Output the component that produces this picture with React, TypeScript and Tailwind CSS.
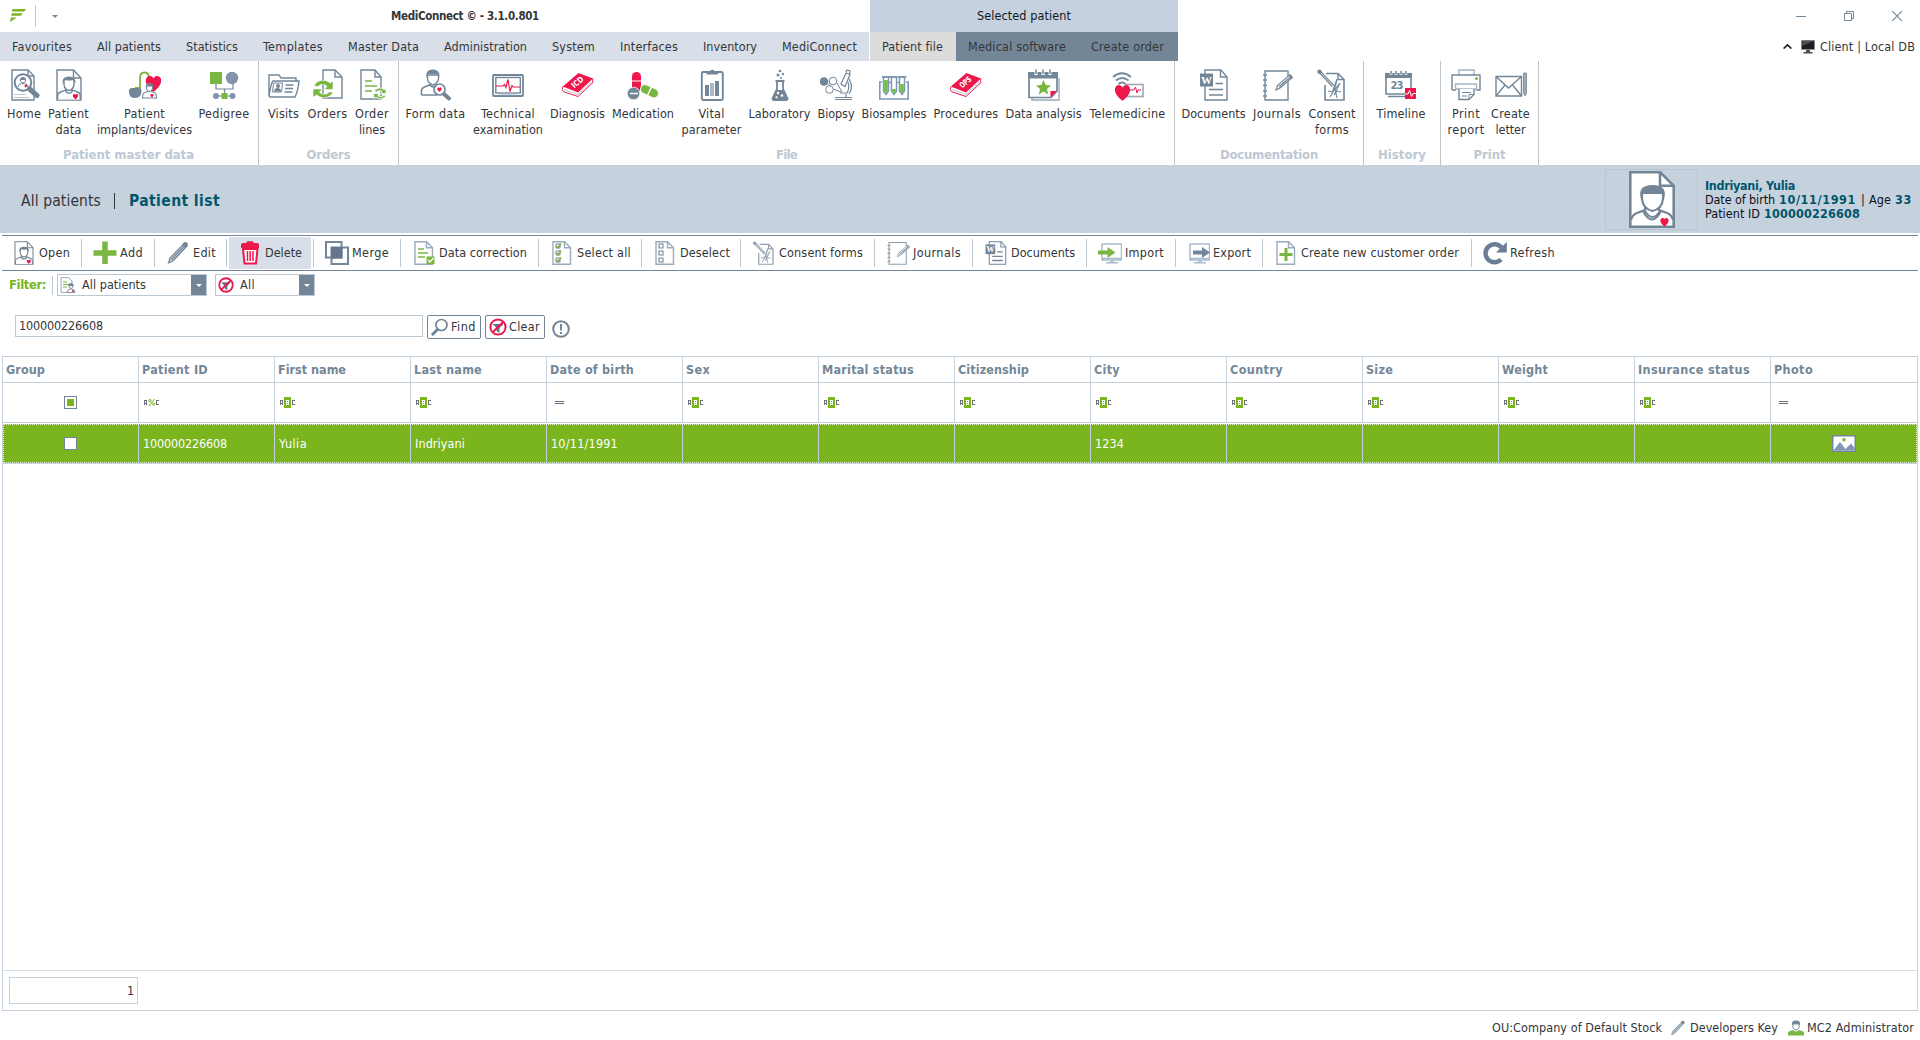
import { useLayoutEffect, useRef } from "react";
import type { ReactNode } from "react";

const SLATE = "#738698";
const GREEN = "#7ab642";
const RED = "#ed174c";

/** Text run whose letter spacing is adjusted so that it occupies `w` pixels. */
function T({ w, children, className = "" }: { w: number; children: string; className?: string }) {
  const ref = useRef<HTMLSpanElement>(null);
  useLayoutEffect(() => {
    const el = ref.current;
    if (!el) return;
    el.style.letterSpacing = "0px";
    const natural = el.getBoundingClientRect().width;
    el.style.letterSpacing = `${(w - natural) / children.length}px`;
  }, [w, children]);
  return (
    <span ref={ref} className={`inline-block whitespace-pre ${className}`}>
      {children}
    </span>
  );
}

function Svg({ className = "size-8", box = "0 0 32 32", children }: { className?: string; box?: string; children: ReactNode }) {
  return (
    <svg className={`shrink-0 ${className}`} viewBox={box} fill="none" stroke={SLATE} strokeWidth="1.4">
      {children}
    </svg>
  );
}

const HEART = "M0 3.6C-5.2-.4-3.2-3.6-1.2-3.2-.5-3.1 0-2.4 0-2 0-2.4.5-3.1 1.2-3.2 3.2-3.6 5.2-.4 0 3.6z";

function Heart({ x, y, s = 1 }: { x: number; y: number; s?: number }) {
  return <path d={HEART} transform={`translate(${x} ${y}) scale(${s})`} fill={RED} stroke="none" />;
}

function Person() {
  return (
    <>
      <path d="M4.6 30.500v-4q0-2.500 3-3.500l4.500-1.800q4 3.200 8 0l4.500 1.800q2.600 1 2.600 3.500v4" fill="#fff" />
      <path d="M11 11v5q1 5 5 5.500 4-.5 5-5.500v-5q-5-3-10 0zM13 20v3q3 2.500 6 0v-3" fill="#fff" />
      <path d="M9.800 15q-1.500-7.500 6-7.500 8 0 6.300 7.500-1-3.500-2.500-4-3 1-7.300 0-2 1-2.500 4z" fill={SLATE} stroke="none" />
    </>
  );
}

function PatientDoc({ className = "size-8" }: { className?: string }) {
  return (
    <Svg className={className}>
      <path d="M4 1h16.500l7.500 8v22H4z" fill="#fff" />
      <path d="M20.500 1v8H28" />
      <Person />
      <Heart x={22.500} y={27.500} s={0.8} />
    </Svg>
  );
}

const HomeIcon = () => (
  <Svg>
    <path d="M4 1h16l6 6v24H4z" />
    <path d="M20 1v6h6" />
    <circle cx="15" cy="13.500" r="8.300" fill="#fff" strokeWidth="2" />
    <path d="M10 18q0-3 3.500-3.500h3q3.500.5 3.500 3.500M12.500 10v2q2.500 4 5 0v-2" strokeWidth="1" />
    <path d="M12 11q0-3 3-3t3 3z" fill={SLATE} stroke="none" />
    <Heart x={17.800} y={17} s={0.4} />
    <path d="M21.500 20l7.500 6.500" strokeWidth="5" strokeLinecap="round" />
    <path d="M6 25.500h12M6 28.500h16" stroke="#b9c5d0" strokeWidth="1" />
  </Svg>
);

const ImplantIcon = () => (
  <Svg>
    <path d="M6 19h5V9q0-5.500 4.500-5.500T20 9v6" stroke={GREEN} strokeWidth="1.800" />
    <path d="M0 21.500q0-2.500 3-2.500h6q3.500 0 3.500 3 0 7-6.500 7t-6-7.500z" fill={SLATE} stroke="none" />
    <Heart x={24.500} y={14.500} s={2.350} />
    <path d="M13.500 29q0-6 4-6l3-1.500 3 1.500q4 0 4 6z" fill="#fff" strokeWidth="1.200" />
    <path d="M17.500 17v3q3 5 6 0v-3z" fill="#fff" strokeWidth="1.100" />
    <path d="M16.700 18q0-4 3.800-4t3.800 4l-1.500-1.500h-4.500z" fill={SLATE} stroke="none" />
    <Heart x={23} y={26.500} s={0.5} />
  </Svg>
);

const PedigreeIcon = () => (
  <Svg>
    <path d="M8 15v5h17v-5M16.500 20v5M8 27h16" strokeWidth="1.200" />
    <path d="M2 3h12v12H2z" fill={GREEN} stroke="none" />
    <circle cx="24" cy="9" r="6.200" fill="#8492aa" stroke="none" />
    <circle cx="8" cy="27" r="3" fill="#8492aa" stroke="none" />
    <circle cx="24.500" cy="27" r="3" fill="#8492aa" stroke="none" />
    <path d="M13.500 24h6v6h-6z" fill={GREEN} stroke="none" />
  </Svg>
);

const VisitsIcon = () => (
  <Svg>
    <path d="M1 27V6h10l2 3h15v4M1 27q2-13 4-15h26q-1 10-4 16H2z" />
    <path d="M5.500 14h9l-1 9h-9z" strokeWidth="1" />
    <circle cx="10" cy="17" r="2" fill={SLATE} stroke="none" />
    <path d="M6 22.500q0-3.500 3.500-3.500t3.500 3.500z" fill={SLATE} stroke="none" />
    <path d="M17.500 16h8M17 19.500h8M16.500 23h8" />
  </Svg>
);

const CYCLE = "M2 9A9.500 8.500 0 0 1 18 6l3-2v8.500h-9l3-3A5.800 5.500 0 0 0 6 9.500zM21 15A9.500 8.500 0 0 1 5 18l-4 2v-8h9.500l-3 3a5.800 5.500 0 0 0 9.500 0z";
const OrdersIcon = () => (
  <Svg>
    <path d="M11 1h12l7 7v21H11z" />
    <path d="M23 1v7h7" />
    <path d={CYCLE} transform="translate(0 8)" fill={GREEN} stroke="#fff" strokeWidth=".6" />
  </Svg>
);

const OrderLinesIcon = () => (
  <Svg>
    <path d="M5 1h14l6 7v22H5z" />
    <path d="M19 1v7h6" />
    <path d="M9 12h7M9 17h12M9 22h7" stroke={GREEN} strokeWidth="1.600" />
    <path d={CYCLE} transform="translate(17 17) scale(.62)" fill={GREEN} stroke="#fff" />
  </Svg>
);

const FormDataIcon = () => (
  <Svg>
    <path d="M1.500 26v-4q0-3 3-4l5-2q4 4 8 0l3 1M1.500 26H17" strokeWidth="1.600" />
    <path d="M7.500 6v4q1 5 5.500 6 4-1 5.500-6V6z" fill="#fff" strokeWidth="1.300" />
    <path d="M6.500 9q-1.500-8.500 6-8.500 8.500 0 6.700 8.500-1-3-2.500-4h-8z" fill={SLATE} stroke="none" />
    <circle cx="19.500" cy="20.500" r="5.500" fill="#fff" strokeWidth="1.700" />
    <Heart x={19.500} y={20.500} s={0.65} />
    <path d="M24 25l5 4.500" strokeWidth="4" strokeLinecap="round" />
  </Svg>
);

const TechIcon = () => (
  <Svg>
    <rect x="1" y="6" width="30" height="21" rx="1" strokeWidth="1.800" />
    <rect x="3.800" y="8.500" width="24.500" height="15.500" />
    <path d="M4 17h7l1.500-1.500 1.500 3 2-8 2 12 2-6 1 1.500H28" stroke={RED} strokeWidth="1.200" />
    <path d="M7 25.500h18" stroke="#cbd4dc" />
  </Svg>
);

function BookIcon({ label }: { label: string }) {
  return (
    <Svg>
      <path d="M.8 17.500L16.500 4 31 9.500 16 23.500z" fill={RED} stroke="none" />
      <path d="M.8 17.500q-1.500 3.500.7 5.200L16 27.500l15-14q-1-2 0-4" stroke={RED} strokeWidth="1" />
      <path d="M2 20.500L16 25.500 29.500 13" stroke="#d5dae0" strokeWidth="1.500" />
      <text
        x="0"
        y="0"
        transform="translate(12.300 19.600) rotate(-41)"
        fill="#fff"
        stroke="none"
        className="font-['DejaVu_Sans_Condensed'] text-[8px] font-bold"
        textLength="13"
        lengthAdjust="spacingAndGlyphs"
      >
        {label}
      </text>
    </Svg>
  );
}

const MedicationIcon = () => (
  <Svg>
    <rect x="5" y="3" width="9" height="20" rx="4.500" fill={RED} stroke="none" />
    <path d="M5 12h9" stroke="#fff" strokeWidth="1" />
    <g transform="rotate(25 22 22)">
      <rect x="13" y="17.500" width="19" height="9" rx="4.500" fill={GREEN} stroke="#fff" strokeWidth=".8" />
      <path d="M22.500 17.500v9" stroke="#fff" />
    </g>
    <circle cx="6.500" cy="24.500" r="6.300" fill={SLATE} stroke="#fff" strokeWidth=".8" />
    <path d="M3 24.500h8" stroke="#fff" strokeWidth="1.500" />
  </Svg>
);

const VitalIcon = () => (
  <Svg>
    <rect x="5.800" y="3" width="21" height="28" rx="1.500" strokeWidth="1.900" />
    <path d="M10.500 5.500V3h3.500q0-2.500 2.300-2.500T18.500 3H22v2.500z" fill={SLATE} stroke="none" />
    <path d="M9 16h4v11H9zM19 12h4v15h-4z" fill={SLATE} stroke="none" />
    <path d="M14 14h4v13h-4z" fill="#aab6c4" stroke="none" />
  </Svg>
);

const LabIcon = () => (
  <Svg>
    <path d="M11.500 12h9M13 12v8l-4.500 9.500q0 1.500 1 1.500h13q1.500 0 1-1.500L19 20v-8" strokeWidth="1.800" />
    <path d="M12.500 21h7l4.500 10H8z" fill={SLATE} stroke="none" />
    <g fill="#fff" stroke="none">
      <circle cx="14" cy="24" r="1.200" />
      <circle cx="18" cy="26.500" r="1.300" />
      <circle cx="12.500" cy="28.300" r="1.100" />
    </g>
    <g fill={SLATE} stroke="none">
      <circle cx="16" cy="2" r="1.300" />
      <circle cx="14" cy="6" r="1.500" />
      <circle cx="19" cy="5" r="1.200" />
      <circle cx="17" cy="9" r="1" />
    </g>
  </Svg>
);

const BiopsyIcon = () => (
  <Svg>
    <path d="M8 15l4 3M13 20l8 3M17 14l5 9M9 14h5" strokeWidth="1" />
    <circle cx="4" cy="12.500" r="4.300" fill={SLATE} stroke="none" />
    <circle cx="13" cy="12" r="3.800" fill="#fff" strokeWidth="1" />
    <circle cx="9.500" cy="20.500" r="3.800" fill="#fff" strokeWidth="1" />
    <path d="M21 15l5-11 4 1.500-5 12zM26 3l1-2 3 1-.5 3" fill="#fff" strokeWidth="1.200" />
    <path d="M29 10q5 8 0 15M28 13q2 6-1 11h-7M15 30.500h17M15 28.500h17M26 25v3" strokeWidth="1.200" />
  </Svg>
);

const SamplesIcon = () => (
  <Svg>
    <path d="M4 13H1.800v17h28.400V13H28" strokeWidth="1.600" stroke="#7f99b2" />
    <path d="M10.500 13.500h3M19 13.500h3" strokeWidth="1.600" stroke="#7f99b2" />
    <g strokeWidth="1.500" fill="#fff" stroke="#7f99b2">
      <path d="M5.500 8v14l2.500 3.500 2.500-3.500V8zM13.500 8v14l2.500 3.500 2.500-3.500V8zM21.500 8v14l2.500 3.500 2.500-3.500V8z" />
    </g>
    <path d="M4 8h8M12.300 8h7.500M20.300 8h8" strokeWidth="2.200" stroke="#7f99b2" />
    <path d="M6.200 11h3.600v11L8 24.500 6.200 22zM14.200 20h3.600v2L16 24.500 14.200 22zM22.200 15h3.600v7L24 24.500 22.200 22z" fill="#72bf44" stroke="none" />
  </Svg>
);

const AnalysisIcon = () => (
  <Svg>
    <path d="M4 29v2h27V9" stroke="#9ba9b7" />
    <path d="M1 5h28v17l-6 6.500H1z" fill="#fff" strokeWidth="1.700" />
    <path d="M0 3h30v6.500H0z" fill={SLATE} stroke="none" />
    <path d="M8 1v5M15 1v5M22 1v5" stroke="#fff" strokeWidth="3" />
    <path d="M8 .5v4.500M15 .5v4.500M22 .5v4.500" strokeWidth="1.500" />
    <path d="M15.500 11l2.200 5 5.300.5-4 3.600 1.200 5.400-4.700-2.900-4.700 2.900 1.200-5.400-4-3.600 5.300-.5z" fill={GREEN} stroke="none" />
    <path d="M22.500 28.500V22H29z" fill={RED} stroke="none" />
  </Svg>
);

const TeleIcon = () => (
  <Svg>
    <path d="M1 8q9-7.500 18 0M4 11.500q6-5 12.500 0M6.500 15q3.500-3 7 0" strokeWidth="1.900" />
    <rect x="14" y="15.500" width="17" height="12" fill="#fff" stroke="#9ba9b7" strokeWidth="1.600" />
    <path d="M18 21h4l1.500-3 1.500 6 1-3h3" stroke={RED} strokeWidth="1" />
    <Heart x={10.500} y={23.500} s={2.300} />
  </Svg>
);

const DocsIcon = ({ className }: { className?: string }) => (
  <Svg className={className}>
    <path d="M7 5V1h16l6 7v23H7V17" />
    <path d="M22.500 1v7H29" />
    <path d="M2 4.500h13v13H2z" fill={SLATE} stroke="none" />
    <text x="3" y="14.800" fill="#fff" stroke="none" className="font-['Liberation_Serif'] text-[11px] font-bold">W</text>
    <path d="M17.500 14.500H25M11 20.500h14M11 26h14" strokeWidth="1.700" />
  </Svg>
);

const JournalIcon = ({ className }: { className?: string }) => (
  <Svg className={className}>
    <path d="M4 2h23v29H4z" />
    <path d="M2 6h4M2 11h4M2 16.500h4M2 22h4M2 27h4" strokeWidth="1.600" />
    <path d="M15 21l1.500-4.500L29 5.500l2.500 3L19 19z" fill="#fff" strokeWidth="1.200" />
    <path d="M18 18L29.500 8M28 6l3 3" strokeWidth="1.600" />
  </Svg>
);

const ConsentIcon = ({ className }: { className?: string }) => (
  <Svg className={className}>
    <path d="M10 4.500h12l6 6V31H9V16" strokeWidth="1.600" />
    <path d="M22 4.500v6h6" />
    <path d="M3 2l14 15" strokeWidth="3.200" />
    <path d="M5 4l12 13" stroke="#dbe1e7" strokeWidth="1" />
    <circle cx="3.500" cy="2.800" r="2.200" fill={SLATE} stroke="none" />
    <path d="M14 28q6-9 7-18l-5 14 8-10-6 12 3-4 4 1M12 22l5 1M19 20l2 9" strokeWidth="1.100" />
  </Svg>
);

const TimelineIcon = () => (
  <Svg>
    <path d="M1 5h25v20H1zM3 27.500h19" fill="#fff" strokeWidth="1.600" />
    <path d="M0 4h27v5H0z" fill={SLATE} stroke="none" />
    <path d="M6 2v4M11 2v4M16 2v4M21 2v4" strokeWidth="2.600" stroke="#fff" />
    <path d="M6 2v3.500M11 2v3.500M16 2v3.500M21 2v3.500" strokeWidth="1.500" />
    <text x="5.500" y="20" fill={SLATE} stroke="none" className="font-['DejaVu_Sans'] text-[10px] font-bold" textLength="13">23</text>
    <path d="M20 19h11v11H20z" fill={RED} stroke="none" />
    <path d="M20 25h3l1.500-3.500 2 6 1.500-3h3" stroke="#fff" strokeWidth="1" />
  </Svg>
);

const PrintIcon = () => (
  <Svg>
    <path d="M9 6V1h15v5" stroke="#a3b5c6" />
    <path d="M2 21V6h28v15h-4M2 21h4" />
    <path d="M5.500 20v-5h21v5z" fill="#fff" stroke="#a3b5c6" />
    <path d="M9 20v10.500h10l5-5V20" fill="#fff" />
    <path d="M12 23.500h9M12 27h5M19 30.500v-5h5" strokeWidth="1" />
    <circle cx="26.500" cy="9.500" r="1.500" fill={GREEN} stroke="none" />
  </Svg>
);

const LetterIcon = () => (
  <Svg>
    <path d="M1 7.500h25.500V27H1zM1 7.500L13.500 19 26.500 7.500M1 27l9-11M26.500 27l-9-11" />
    <path d="M28.500 4h3v20l-1.500 3-1.500-3z" fill="#9ba9b7" strokeWidth=".8" />
  </Svg>
);

type RibbonItem = { cell: string; icon: ReactNode; l: [string, number][] };
type RibbonGroup = { cls: string; title: string; tw: number; items: RibbonItem[] };

const ribbon: RibbonGroup[] = [
  {
    cls: "w-[259px] pl-1 pr-[5px]",
    title: "Patient master data",
    tw: 131,
    items: [
      { cell: "w-10", icon: <HomeIcon />, l: [["Home", 34]] },
      { cell: "w-[49px]", icon: <PatientDoc />, l: [["Patient", 41], ["data", 26]] },
      { cell: "w-[103px]", icon: <ImplantIcon />, l: [["Patient", 41], ["implants/devices", 95]] },
      { cell: "w-14", icon: <PedigreeIcon />, l: [["Pedigree", 51]] },
    ],
  },
  {
    cls: "w-[140px] px-[5px]",
    title: "Orders",
    tw: 44,
    items: [
      { cell: "w-[39px]", icon: <VisitsIcon />, l: [["Visits", 31]] },
      { cell: "w-[49px]", icon: <OrdersIcon />, l: [["Orders", 40]] },
      { cell: "w-10", icon: <OrderLinesIcon />, l: [["Order", 34], ["lines", 26]] },
    ],
  },
  {
    cls: "w-[776px] px-[3px]",
    title: "File",
    tw: 21,
    items: [
      { cell: "w-[67px]", icon: <FormDataIcon />, l: [["Form data", 60]] },
      { cell: "w-[78px]", icon: <TechIcon />, l: [["Technical", 54], ["examination", 70]] },
      { cell: "w-[61px]", icon: <BookIcon label="ICD" />, l: [["Diagnosis", 55]] },
      { cell: "w-[70px]", icon: <MedicationIcon />, l: [["Medication", 62]] },
      { cell: "w-[67px]", icon: <VitalIcon />, l: [["Vital", 26], ["parameter", 60]] },
      { cell: "w-[69px]", icon: <LabIcon />, l: [["Laboratory", 62]] },
      { cell: "w-11", icon: <BiopsyIcon />, l: [["Biopsy", 37]] },
      { cell: "w-[72px]", icon: <SamplesIcon />, l: [["Biosamples", 65]] },
      { cell: "w-[72px]", icon: <BookIcon label="OPS" />, l: [["Procedures", 65]] },
      { cell: "w-[83px]", icon: <AnalysisIcon />, l: [["Data analysis", 76]] },
      { cell: "w-[85px]", icon: <TeleIcon />, l: [["Telemedicine", 76]] },
    ],
  },
  {
    cls: "w-[189px] px-[3px]",
    title: "Documentation",
    tw: 98,
    items: [
      { cell: "w-[71px]", icon: <DocsIcon />, l: [["Documents", 64]] },
      { cell: "w-14", icon: <JournalIcon />, l: [["Journals", 48]] },
      { cell: "w-[54px]", icon: <ConsentIcon />, l: [["Consent", 47], ["forms", 34]] },
    ],
  },
  {
    cls: "w-[77px] px-[9px]",
    title: "History",
    tw: 48,
    items: [{ cell: "w-14", icon: <TimelineIcon />, l: [["Timeline", 49]] }],
  },
  {
    cls: "w-[98px] px-[3px]",
    title: "Print",
    tw: 32,
    items: [
      { cell: "w-11", icon: <PrintIcon />, l: [["Print", 28], ["report", 37]] },
      { cell: "w-[45px]", icon: <LetterIcon />, l: [["Create", 39], ["letter", 30]] },
    ],
  },
];

const menu: [string, number][] = [
  ["Favourites", 60],
  ["All patients", 64],
  ["Statistics", 52],
  ["Templates", 60],
  ["Master Data", 71],
  ["Administration", 83],
  ["System", 43],
  ["Interfaces", 58],
  ["Inventory", 54],
  ["MediConnect", 75],
];

function PencilIcon({ className }: { className?: string }) {
  return (
    <Svg className={className} box="0 0 24 24">
      <path d="M2.500 22l1.500-5L17.500 3l3 2.500L7 20z" fill="#c4cdd8" strokeWidth="1.200" />
      <path d="M5.500 18.500L18 5.500" strokeWidth="1.200" />
      <circle cx="19.300" cy="3.700" r="2.600" fill={SLATE} stroke="none" />
    </Svg>
  );
}

function SheetIcon({ children }: { children: ReactNode }) {
  return (
    <Svg className="size-6" box="0 0 24 24">
      <path d="M3 .7h11.500l6 6v16.600H3z" stroke="#9aabbb" />
      <path d="M14.500.7v6h6" stroke="#9aabbb" />
      {children}
    </Svg>
  );
}

function ScreenIcon({ children }: { children: ReactNode }) {
  return (
    <Svg className="size-6" box="0 0 24 24">
      <rect x="4" y="3" width="19.500" height="16" stroke="#a9bccd" strokeWidth="1.500" />
      <path d="M4 17.500h19.500M8 21.800h12M12 20h4" stroke="#a9bccd" strokeWidth="1.500" />
      {children}
    </Svg>
  );
}

type Tool = { cls: string; label: string; w: number; icon: ReactNode; active?: boolean };
const tools: Tool[] = [
  { cls: "w-20 pl-2.5", label: "Open", w: 31, icon: <PatientDoc className="size-6" /> },
  {
    cls: "w-[73px] pl-[11px]", label: "Add", w: 23,
    icon: <Svg className="size-6" box="0 0 24 24"><path d="M12 .5v22.500M.5 12H23.500" stroke={GREEN} strokeWidth="5.500" /></Svg>,
  },
  { cls: "w-[72px] pl-[11px]", label: "Edit", w: 23, icon: <PencilIcon className="size-6" /> },
  {
    cls: "w-[87px] pl-[11px]", label: "Delete", w: 37, active: true,
    icon: (
      <Svg className="size-6" box="0 0 24 24">
        <path d="M3 3.500q0-1.500 2-1.500h3L9.500.3h5L16 2h3q2 0 2 1.500V7H3z" fill={RED} stroke="none" />
        <path d="M5 8h14.500L18 22.500H6.500z" stroke={RED} strokeWidth="2" fill="#fff" />
        <path d="M9.500 10v10M12.200 10v10M15 10v10" stroke={RED} strokeWidth="1.500" />
      </Svg>
    ),
  },
  {
    cls: "w-[87px] pl-[11px]", label: "Merge", w: 37,
    icon: (
      <Svg className="size-6" box="0 0 24 24">
        <path d="M1 1h15.500v15.500H1z" strokeWidth="2" />
        <path d="M6.500 6.500H23V23H6.500z" strokeWidth="2" />
        <path d="M6 6h11.500v11.500H6z" fill="#64758c" stroke="none" />
      </Svg>
    ),
  },
  {
    cls: "w-[138px] pl-[11px]", label: "Data correction", w: 88,
    icon: (
      <SheetIcon>
        <path d="M6 8h6M6 12h10M6 16h7" stroke={GREEN} strokeWidth="1.300" />
        <path d="M14.500 15.500h8V23h-8z" fill={GREEN} stroke="none" />
        <path d="M16 19l2 2 3.500-4" stroke="#fff" />
      </SheetIcon>
    ),
  },
  {
    cls: "w-[103px] pl-[11px]", label: "Select all", w: 54,
    icon: (
      <SheetIcon>
        <path d="M6 3h4v4H6zM6 10h4v4H6zM6 17h4v4H6z" strokeWidth="1" />
        <path d="M6.500 5l1.500 1.500 3-4M6.500 12l1.500 1.500 3-4M6.500 19l1.500 1.500 3-4" stroke={GREEN} strokeWidth="1.600" />
      </SheetIcon>
    ),
  },
  {
    cls: "w-[99px] pl-[11px]", label: "Deselect", w: 50,
    icon: <SheetIcon><path d="M6 3h4v4H6zM6 10h4v4H6zM6 17h4v4H6z" strokeWidth="1.100" /></SheetIcon>,
  },
  { cls: "w-[134px] pl-[11px]", label: "Consent forms", w: 84, icon: <ConsentIcon className="size-6 opacity-80" /> },
  { cls: "w-[98px] pl-[11px]", label: "Journals", w: 48, icon: <JournalIcon className="size-6 opacity-80" /> },
  { cls: "w-[114px] pl-[11px]", label: "Documents", w: 64, icon: <DocsIcon className="size-6" /> },
  {
    cls: "w-[89px] pl-[11px]", label: "Import", w: 39,
    icon: <ScreenIcon><path d="M0 9.500h9.500V6l8 5.500-8 5.500v-3.500H0z" fill={GREEN} stroke="none" /></ScreenIcon>,
  },
  {
    cls: "w-[87px] pl-[10px]", label: "Export", w: 38,
    icon: <ScreenIcon><path d="M7 9.500h9V6l8 5.500-8 5.500v-3.500H7z" fill={SLATE} stroke="none" /></ScreenIcon>,
  },
  {
    cls: "w-[209px] pl-[11px]", label: "Create new customer order", w: 158,
    icon: <SheetIcon><path d="M12 7v13M5.500 13.500h13" stroke={GREEN} strokeWidth="3" /></SheetIcon>,
  },
  {
    cls: "w-[100px] pl-[11px]", label: "Refresh", w: 45,
    icon: (
      <Svg className="size-6" box="0 0 24 24">
        <path d="M18 18.500A9 9 0 1 1 18.500 6.500" strokeWidth="4.500" stroke="#6b7e95" />
        <path d="M23.800 1v10.500H13z" fill="#6b7e95" stroke="none" />
      </Svg>
    ),
  },
];

const NoFilter = ({ className }: { className: string }) => (
  <Svg className={className} box="0 0 18 18">
    <path d="M3.500 6h11l-4 4v5l-3-2v-3z" fill="#64758c" stroke="none" />
    <circle cx="9" cy="9" r="7.600" stroke={RED} strokeWidth="2" />
    <path d="M14.300 3.700L3.700 14.300" stroke={RED} strokeWidth="2" />
  </Svg>
);

type Column = { cls: string; head: string; w: number; filter: "box" | "pct" | "abc" | "eq"; value?: string; vw?: number };
const columns: Column[] = [
  { cls: "w-[136px]", head: "Group", w: 39, filter: "box" },
  { cls: "w-[136px]", head: "Patient ID", w: 66, filter: "pct", value: "100000226608", vw: 84 },
  { cls: "w-[136px]", head: "First name", w: 68, filter: "abc", value: "Yulia", vw: 28 },
  { cls: "w-[136px]", head: "Last name", w: 68, filter: "abc", value: "Indriyani", vw: 50 },
  { cls: "w-[136px]", head: "Date of birth", w: 84, filter: "eq", value: "10/11/1991", vw: 67 },
  { cls: "w-[136px]", head: "Sex", w: 24, filter: "abc" },
  { cls: "w-[136px]", head: "Marital status", w: 92, filter: "abc" },
  { cls: "w-[136px]", head: "Citizenship", w: 71, filter: "abc" },
  { cls: "w-[136px]", head: "City", w: 26, filter: "abc", value: "1234", vw: 29 },
  { cls: "w-[136px]", head: "Country", w: 53, filter: "abc" },
  { cls: "w-[136px]", head: "Size", w: 27, filter: "abc" },
  { cls: "w-[136px]", head: "Weight", w: 46, filter: "abc" },
  { cls: "w-[136px]", head: "Insurance status", w: 112, filter: "abc" },
  { cls: "flex-1", head: "Photo", w: 39, filter: "eq" },
];

function FilterMark({ kind }: { kind: Column["filter"] }) {
  if (kind === "box")
    return (
      <div className="mx-auto flex size-[13px] items-center justify-center border border-[#738698]">
        <div className="size-[7px] bg-[#7ab51d]" />
      </div>
    );
  if (kind === "eq")
    return (
      <div className="ml-2 flex w-[9px] flex-col gap-px">
        <div className="h-px bg-[#6d6e78]" />
        <div className="h-px bg-[#6d6e78]" />
      </div>
    );
  return (
    <svg className="ml-[5px] h-[11px] w-4" viewBox="0 0 16 11" fill="none" stroke="#6d6e78" shapeRendering="crispEdges">
      <path d="M.5 8V3.500h2V8M.5 6h2M15 3.500h-2.500v4H15" />
      {kind === "abc" ? (
        <>
          <path d="M4 0h7v11H4z" fill="#7ab51d" stroke="none" />
          <path d="M6.500 3.500h2v4h-2zM6.500 5.500h2" stroke="#fff" />
        </>
      ) : (
        <g stroke="#7ab51d" shapeRendering="auto">
          <path d="M10.500 2L5 9" />
          <circle cx="6" cy="3.700" r="1.200" />
          <circle cx="9.700" cy="7.200" r="1.200" />
        </g>
      )}
    </svg>
  );
}

function Combo({ cls, icon, label, w }: { cls: string; icon: ReactNode; label: string; w: number }) {
  return (
    <div className={`flex h-[22px] items-center border border-[#bcc8d4] pl-0.5 ${cls}`}>
      {icon}
      <T w={w} className="ml-1.5">{label}</T>
      <div className="ml-auto flex h-5 w-[15px] items-center justify-center bg-[#738698]">
        <svg className="h-[3px] w-[6px]" viewBox="0 0 6 3"><path d="M0 0h6L3 3z" fill="#fff" /></svg>
      </div>
    </div>
  );
}

export default function App() {
  return (
    <div className="flex h-[1040px] w-[1920px] flex-col overflow-hidden bg-white font-['DejaVu_Sans_Condensed','DejaVu_Sans',sans-serif] text-[12.500px] leading-4 text-[#33363a]">
      <div className="flex h-8 shrink-0">
        <div className="flex w-[870px] items-center">
          <svg className="mt-[-1px] ml-2.5 h-[13px] w-4" viewBox="0 0 16 13" fill="#7ab51d">
            <path d="M2.500 0H16l-1.800 2.500H1.800zM1.700 4.300h11L11 6.700H1.200zM.9 8.400h6L4.500 10 0 13z" />
          </svg>
          <div className="ml-[9px] h-[22px] w-px bg-[#bcc8d4]" />
          <svg className="ml-4 h-[3px] w-1.5" viewBox="0 0 6 3"><path d="M0 0h6L3 3z" fill={SLATE} /></svg>
          <T w={148} className="ml-[333px] text-[11.500px] font-bold">MediConnect © - 3.1.0.801</T>
        </div>
        <div className="flex w-[308px] items-center justify-center bg-[#c5d1df] text-[#101820]">
          <T w={94}>Selected patient</T>
        </div>
        <div className="flex flex-1 items-center justify-end gap-[38px] pr-[18px]">
          <Svg className="size-2.5" box="0 0 10 10"><path d="M0 5.500h10" strokeWidth="1" /></Svg>
          <Svg className="size-2.5" box="0 0 10 10"><path d="M.5 2.500h7v7h-7zM2.500 2.500v-2h7v7h-2" strokeWidth="1" /></Svg>
          <Svg className="size-2.5" box="0 0 10 10"><path d="M0 0l10 10M10 0L0 10" strokeWidth="1.200" /></Svg>
        </div>
      </div>

      <div className="flex h-[29px] shrink-0">
        <div className="flex w-[869px] items-center gap-[25px] bg-[#d8dfe8] pl-3">
          {menu.map(([label, w]) => (
            <T key={label} w={w}>{label}</T>
          ))}
        </div>
        <div className="ml-px flex w-[86px] items-center bg-[#dcdcdc] pl-3"><T w={61}>Patient file</T></div>
        <div className="flex w-[222px] items-center gap-[25px] bg-[#738698] pl-3">
          <T w={98}>Medical software</T>
          <T w={73}>Create order</T>
        </div>
        <div className="flex flex-1 items-center justify-end pr-[5px]">
          <svg className="h-[5px] w-[9px]" viewBox="0 0 9 5" fill="none" stroke="#16202a" strokeWidth="1.700"><path d="M.6 4.500l3.900-3.600 3.900 3.600" /></svg>
          <svg className="mr-[5px] ml-[9px] h-3.5 w-3.5" viewBox="0 0 14 14">
            <path d="M0 0h14v10H0z" fill="#b8bcc0" />
            <path d="M.7.7h12.600v8.600H.7z" fill="#1d1f22" />
            <path d="M.7.700h12.600L.7 6z" fill="#4a4d52" />
            <path d="M5 10h4v2h2.500v1.500h-9V12H5z" fill="#4b4e52" />
          </svg>
          <T w={95}>Client | Local DB</T>
        </div>
      </div>

      <div className="flex h-[104px] shrink-0">
        {ribbon.map((g) => (
          <div key={g.title} className={`flex flex-col border-r border-[#c3c6c9] ${g.cls}`}>
            <div className="flex h-[86px] pt-2">
              {g.items.map((it) => (
                <div key={it.l[0][0] + it.cell} className={`flex shrink-0 flex-col items-center ${it.cell}`}>
                  {it.icon}
                  <div className="mt-[5px] flex flex-col items-center">
                    {it.l.map(([t, w]) => (
                      <T key={t} w={w}>{t}</T>
                    ))}
                  </div>
                </div>
              ))}
            </div>
            <div className="text-center text-[13px] font-bold text-[#bcc8d4]"><T w={g.tw}>{g.title}</T></div>
          </div>
        ))}
      </div>

      <div className="flex h-[68px] shrink-0 items-center bg-[#c6d1de] pl-[21px]">
        <div className="flex items-center pt-[3px] text-[15.500px]">
          <T w={80}>All patients</T>
          <div className="ml-[13px] h-4 w-px bg-[#33363a]" />
          <T w={91} className="ml-3.5 font-bold text-[#00566b]">Patient list</T>
        </div>
        <div className="ml-auto flex h-[61px] w-[93px] items-center justify-center border border-[#bac6d1]">
          <svg className="h-[57px] w-[46px]" viewBox="0 0 46 57" fill="none" stroke={SLATE} strokeWidth="2.600">
            <path d="M1.300 1.300h30l13.400 13.500v41H1.300z" fill="#fff" />
            <path d="M31 1.300v13.500h13.700" />
            <path d="M2 49q1-5 6-7l8-3v-5h14v5l8 3q5 2 6 7M14 40q9 17 18 0" fill="#fff" strokeWidth="2.200" />
            <path d="M13 22v6q1 10 10.500 12Q33 38 34 28v-6z" fill="#fff" strokeWidth="2.200" />
            <path d="M12 28q-4-14 11.500-14T35 28q-1-5-3-7-9 2-17 0-2 2-3 7z" fill={SLATE} stroke="none" />
            <path d="M16 40q7.500 12 15 0" strokeWidth="2" />
            <path d={HEART} transform="translate(35.500 51) scale(1.250)" fill={RED} stroke="none" />
          </svg>
        </div>
        <div className="ml-[7px] w-[215px] pt-px leading-[14px] text-[#0c1116]">
          <div className="font-bold text-[#00566b]"><T w={90}>Indriyani, Yulia</T></div>
          <div className="flex">
            <T w={70}>Date of birth</T>
            <T w={77} className="ml-1 font-bold text-[#00566b]">10/11/1991</T>
            <T w={5} className="ml-[5px]">|</T>
            <T w={22} className="ml-[3px]">Age</T>
            <T w={17} className="ml-1 font-bold text-[#00566b]">33</T>
          </div>
          <div className="flex">
            <T w={55}>Patient ID</T>
            <T w={96} className="ml-1 font-bold text-[#00566b]">100000226608</T>
          </div>
        </div>
      </div>

      <div className="mx-0.5 mt-0.5 flex h-9 shrink-0 border-y border-[#738698] pt-px">
        {tools.map((t, i) => (
          <div key={t.label} className={`relative flex h-8 items-center gap-[3px] ${t.cls}`}>
            {t.active && <div className="absolute top-0 right-[3px] left-[2px] h-8 bg-[#d8dfe8]" />}
            <div className="relative flex items-center gap-[3px]">
              {t.icon}
              <T w={t.w}>{t.label}</T>
            </div>
            {i < tools.length - 1 && <div className="absolute top-0.5 right-0 h-7 w-px bg-[#bcc8d4]" />}
          </div>
        ))}
      </div>

      <div className="mt-[3px] flex h-[22px] shrink-0 items-center pl-[9px]">
        <T w={37} className="text-[13px] font-bold text-[#7ab51d]">Filter:</T>
        <div className="ml-1.5 h-[19px] w-px bg-[#bcc8d4]" />
        <Combo
          cls="ml-1 w-[150px]"
          label="All patients"
          w={64}
          icon={
            <Svg className="size-4" box="0 0 16 16">
              <path d="M1 .6h7.500L12 4v4M1 .6v14.800h6" stroke="#9aabbb" strokeWidth="1" />
              <path d="M3 5h4M3 7.500h6M3 10h4" stroke={GREEN} strokeWidth="1" />
              <path d="M7 15.500q0-3 3-3.500h2q3 .5 3 3.500zM9 8v2q2 3 4 0V8" strokeWidth=".9" fill="#fff" />
              <path d="M8.500 9q0-3 2.500-3t2.500 3z" fill={SLATE} stroke="none" />
              <circle cx="13" cy="14" r="1" fill={RED} stroke="none" />
            </Svg>
          }
        />
        <Combo cls="ml-2 w-[100px]" label="All" w={15} icon={<NoFilter className="size-4" />} />
      </div>

      <div className="mt-[19px] flex h-6 shrink-0 items-start pl-[15px]">
        <div className="flex h-[22px] w-[408px] items-center border border-[#bcc8d4] pl-[3px]"><T w={84}>100000226608</T></div>
        <div className="ml-1 flex h-6 w-[54px] items-center rounded-[2px] border border-[#738698] pl-[3px]">
          <Svg className="size-[18px]" box="0 0 18 18">
            <circle cx="10.500" cy="7" r="5.500" strokeWidth="1.700" />
            <path d="M6.500 11.500L1.800 16.200" strokeWidth="3" strokeLinecap="round" />
          </Svg>
          <T w={25} className="ml-[2px]">Find</T>
        </div>
        <div className="ml-1 flex h-6 w-[60px] items-center rounded-[2px] border border-[#738698] pl-[3px]">
          <NoFilter className="size-[18px]" />
          <T w={31} className="ml-[2px]">Clear</T>
        </div>
        <Svg className="mt-[5px] ml-[7px] size-[18px]" box="0 0 18 18">
          <circle cx="9" cy="9" r="7.800" strokeWidth="2" />
          <path d="M9 4v6.500M9 12v2" strokeWidth="2" />
        </Svg>
      </div>

      <div className="mx-0.5 mt-[17px] flex h-[655px] shrink-0 flex-col border border-[#c6d1de]">
        <div className="flex h-[26px] shrink-0 border-b border-[#c6d1de]">
          {columns.map((c) => (
            <div key={c.head} className={`flex items-center border-r border-[#c6d1de] pl-[3px] font-bold text-[#738698] last:border-r-0 ${c.cls}`}>
              <T w={c.w}>{c.head}</T>
            </div>
          ))}
        </div>
        <div className="flex h-10 shrink-0 border-b border-[#c6d1de]">
          {columns.map((c) => (
            <div key={c.head} className={`flex items-center border-r border-[#c6d1de] last:border-r-0 ${c.cls}`}>
              <FilterMark kind={c.filter} />
            </div>
          ))}
        </div>
        <div className="flex h-[41px] shrink-0 border-b border-[#c6d1de] pt-px">
          <div className="flex h-[39px] w-[1914px] border border-dotted border-[#e4efd0] bg-[#7ab51d] text-white">
            {columns.map((c, i) => (
              <div
                key={c.head}
                className={`flex items-center border-r border-[#c6d1de] pl-1 last:border-r-0 ${i === 0 ? "w-[135px]" : c.cls}`}
              >
                {i === 0 && <div className="ml-14 size-[13px] border border-[#738698] bg-white" />}
                {c.value && <T w={c.vw ?? 0}>{c.value}</T>}
                {c.head === "Photo" && (
                  <svg className="ml-[57px] h-[17px] w-6" viewBox="0 0 24 17">
                    <path d="M0 0h24v17H0z" fill={SLATE} />
                    <path d="M1.500 1.500h21v14h-21z" fill="#fff" />
                    <path d="M1.500 15.500L8 7l5.500 7L19 8.500l3.500 4.500v2.500z" fill="#7f97b2" />
                    <circle cx="12" cy="4.800" r="1.800" fill={GREEN} />
                  </svg>
                )}
              </div>
            ))}
          </div>
        </div>
        <div className="flex-1" />
        <div className="flex h-10 shrink-0 border-t border-[#d4dee8] pt-1.5 pl-1.5">
          <div className="flex h-[27px] w-[129px] items-center justify-end border border-[#c6d1de] pr-[2px]"><T w={8}>1</T></div>
        </div>
      </div>

      <div className="flex h-[33px] shrink-0 items-center justify-end pr-[6px]">
        <T w={170}>OU:Company of Default Stock</T>
        <PencilIcon className="ml-2 size-4" />
        <T w={88} className="ml-1">Developers Key</T>
        <Svg className="mr-[3px] ml-2.5 size-4" box="0 0 16 16">
          <path d="M0 15.500v-2.500q0-1.500 2-2l3-1q3 3 6 0l3 1q2 .5 2 2v2.500z" fill={GREEN} stroke="none" />
          <path d="M4.800 4v3q1 3 3.200 3t3.200-3V4z" fill="#fff" strokeWidth=".9" />
          <path d="M4 5.500Q3 .5 8 .5t4 5l-1-1.500H5z" fill={SLATE} stroke="none" />
        </Svg>
        <T w={107}>MC2 Administrator</T>
      </div>
    </div>
  );
}
